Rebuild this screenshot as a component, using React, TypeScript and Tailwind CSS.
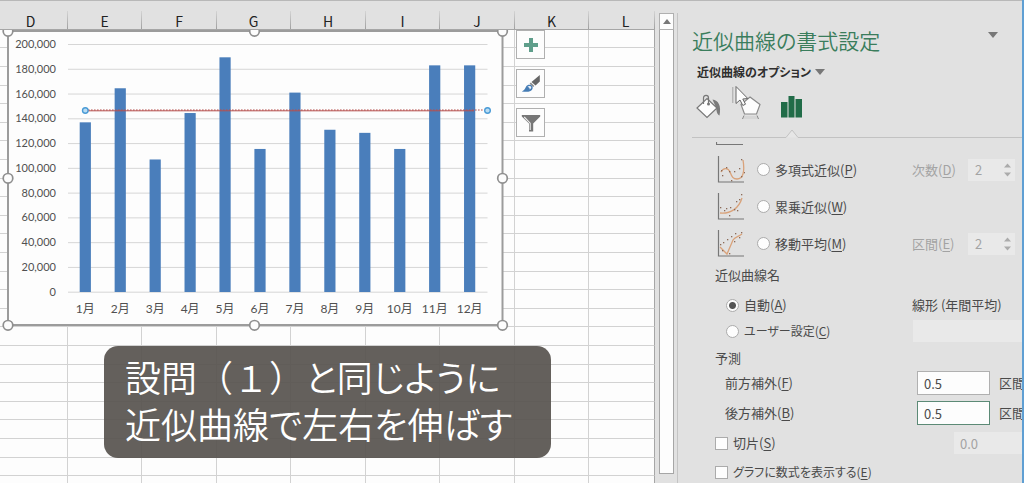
import React from 'react';

const columns = ['D', 'E', 'F', 'G', 'H', 'I', 'J', 'K', 'L'];
const rows = Array.from({ length: 26 }, (_, i) => i);

const bars = [
  { label: '1月', value: 137000 },
  { label: '2月', value: 164500 },
  { label: '3月', value: 107000 },
  { label: '4月', value: 144500 },
  { label: '5月', value: 189500 },
  { label: '6月', value: 115500 },
  { label: '7月', value: 161000 },
  { label: '8月', value: 131000 },
  { label: '9月', value: 128500 },
  { label: '10月', value: 115500 },
  { label: '11月', value: 183000 },
  { label: '12月', value: 183000 },
];

const ticks = Array.from({ length: 11 }, (_, i) => i * 20000);
const BASE = 292;
const yOf = (v: number) => BASE - (v / 200000) * 247.7;
const xOf = (i: number) => 85.3 + i * 34.94;

const handles = [
  [8, 31], [254.5, 31], [502.5, 31],
  [8, 178], [502.5, 178],
  [8, 325], [254.5, 325], [502.5, 325],
];

function Chart() {
  return (
    <svg
      className="absolute left-0 top-[29px] font-['Lato','Noto_Sans_CJK_JP',sans-serif]"
      width="510"
      height="302"
      viewBox="0 30 510 302"
      role="img"
      aria-label="月別棒グラフ"
    >
      <rect x="8" y="31" width="494.5" height="294" fill="#fdfdfd" stroke="#9c9c9c" strokeWidth="2" />
      {ticks.map((t) => (
        <g key={t}>
          <line x1="68" x2="487.5" y1={yOf(t) + 0.2} y2={yOf(t) + 0.2} stroke="#d6d6d6" strokeWidth="1" />
          <text x="56" y={yOf(t) + 3.7} fontSize="11" textAnchor="end" fill="#505050">
            {t.toLocaleString('en-US')}
          </text>
        </g>
      ))}
      {bars.map((b, i) => (
        <g key={b.label}>
          <rect x={xOf(i) - 5.6} y={yOf(b.value)} width="11.2" height={BASE - yOf(b.value)} fill="#4a7ebb" />
          <text x={xOf(i)} y="313" fontSize="12" textAnchor="middle" fill="#505050">
            {b.label}
          </text>
        </g>
      ))}
      <line x1="88" x2="474" y1="110.8" y2="110.8" stroke="#b5504f" strokeWidth="1" />
      <line x1="88" x2="484" y1="110" y2="110" stroke="#b5504f" strokeWidth="1.2" strokeDasharray="1.6 1.4" />
      {[85.3, 487.5].map((x) => (
        <circle key={x} cx={x} cy="110.5" r="2.8" fill="#b9dcf2" stroke="#4a9bd6" strokeWidth="1.4" />
      ))}
      {handles.map(([x, y]) => (
        <circle key={`${x}-${y}`} cx={x} cy={y + 0.3} r="4.8" fill="#fdfdfd" stroke="#8f8f8f" strokeWidth="1.7" />
      ))}
    </svg>
  );
}

function ChartButtons() {
  const cls = 'flex size-[29px] items-center justify-center border border-[#b0b0b0] bg-[#fdfdfd]';
  return (
    <div className="absolute left-[516px] top-[29px] flex flex-col gap-[10px]">
      <button className={cls} aria-label="グラフ要素">
        <svg width="16" height="16" viewBox="0 0 16 16">
          <path d="M6 1h4v5h5v4h-5v5H6v-5H1V6h5z" fill="#5f9e8b" />
        </svg>
      </button>
      <button className={cls} aria-label="グラフスタイル">
        <svg width="20" height="20" viewBox="0 0 20 20">
          <path d="M18.800 1v6.500l-4.300 4-4-3.500z" fill="#666" />
          <path d="M9.800 8.600l3.600 3.400-1.300 1.100-3.500-3.300z" fill="#8a8a8a" />
          <path d="M.8 17.500c2.700-1.200 3-2.800 4.200-4.800 1.300-2.200 4.300-2.600 5.900-1 1.500 1.600.9 4.200-1.400 5.200-2.400 1.100-5.200.8-8.700.6z" fill="#467db5" />
          <path d="M6.500 12.800c1.300-1.200 2.900-1 3.500-.2s.2 2.200-1.300 2.900c.1-1.500-.7-2.300-2.200-2.700z" fill="#f0f5fa" />
        </svg>
      </button>
      <button className={cls} aria-label="グラフフィルター">
        <svg width="20" height="20" viewBox="0 0 20 20">
          <path d="M.8 2h18.400v1.500L12.200 10.500v8H8v-8L.8 3.500z" fill="#777" />
          <path d="M3.200 4l6 6.200V17" fill="none" stroke="#eee" strokeWidth="1.100" />
        </svg>
      </button>
    </div>
  );
}

function Sheet() {
  return (
    <div className="relative min-w-0 flex-1 overflow-hidden">
      <table className="w-full table-fixed border-separate border-spacing-0 bg-[#fdfdfd]">
        <colgroup>
          <col className="w-[68px]" />
          <col className="w-[74px]" />
          <col className="w-[75px]" />
          <col className="w-[74px]" />
          <col className="w-[75px]" />
          <col className="w-[74px]" />
          <col className="w-[75px]" />
          <col className="w-[74px]" />
          <col />
        </colgroup>
        <thead>
          <tr className="h-[29px]">
            {columns.map((c) => (
              <th
                key={c}
                scope="col"
                className="border-b border-[#a6a6a6] bg-[#e1e1e1] p-0 align-bottom font-normal text-[#222]"
              >
                <div className="flex items-end text-[14px] leading-4">
                  <span className={c === 'D' ? 'flex-1 pr-[6px]' : c === 'L' ? 'flex-1 pl-2' : 'flex-1'}>{c}</span>
                  <span className="h-[18px] w-px bg-linear-to-b from-[#d4d4d4] to-[#a0a0a0]" />
                </div>
              </th>
            ))}
          </tr>
        </thead>
        <tbody>
          {rows.map((r) => (
            <tr key={r} className="h-[19px] nth-[5n+1]:h-[18px] nth-[5n+4]:h-[18px]">
              {columns.map((c) => (
                <td key={c} className="border-b border-r border-[#d2d2d2] p-0 last:border-r-[#a6a6a6]" />
              ))}
            </tr>
          ))}
        </tbody>
      </table>
      <Chart />
      <ChartButtons />
      <p className="absolute left-[104px] top-[345px] w-[447px] whitespace-nowrap rounded-[14px] bg-[#57524e]/92 px-[21px] pb-[11px] pt-[7px] text-[36px] font-[350] leading-[47px] text-white [font-feature-settings:'palt']">
        設問<span className="[font-feature-settings:normal]">（１）</span>と同じように
        <br />
        近似曲線で左右を伸ばす
      </p>
    </div>
  );
}

function ScrollBar() {
  return (
    <div className="ml-1 mr-[3px] flex w-[15px] flex-col pb-[9px] pt-3">
      <button className="flex h-[17px] items-center justify-center border border-[#b0b0b0] bg-[#fdfdfd]" aria-label="上へスクロール">
        <svg width="8" height="5" viewBox="0 0 8 5">
          <path d="M4 0l4 5H0z" fill="#777" />
        </svg>
      </button>
      <div className="flex-1 border border-t-0 border-[#a6a6a6] bg-[#fdfdfd]" />
    </div>
  );
}

const curves = {
  poly: {
    line: 'M4 16c2-4 7-5 9 0s3 7 7 7c6 0 8-7 6-19',
    dots: [[4, 14], [5, 19], [9, 11], [12, 15], [14, 24], [17, 15], [22, 12], [24, 3], [24, 20], [27, 16]],
  },
  power: {
    line: 'M3 20c11 1 19-5 22-15',
    dots: [[3, 14], [7, 17], [9, 15], [12, 22], [13, 14], [17, 16], [20, 17], [19, 8], [22, 6], [24, 1]],
  },
  moving: {
    line: 'M3 17l7 7 6-14c2-3 5-3 9-6',
    dots: [[3, 14], [5, 20], [6, 12], [12, 23], [10, 9], [14, 6], [17, 11], [18, 3], [22, 7], [24, 2]],
  },
};

function CurveIcon({ kind }: { kind: keyof typeof curves }) {
  const c = curves[kind];
  return (
    <svg width="28" height="27" viewBox="0 0 28 27" aria-hidden="true">
      <path d="M1.500 0v26H27" fill="none" stroke="#777" strokeWidth="1.200" />
      <path d={c.line} fill="none" stroke="#d9a27a" strokeWidth="1.300" />
      {c.dots.map(([x, y]) => (
        <rect key={`${x}-${y}`} x={x} y={y} width="1.300" height="1.300" fill="#8a6a58" />
      ))}
    </svg>
  );
}

const radioCls =
  'size-[13px] shrink-0 appearance-none rounded-full border border-[#ababab] bg-[#fdfdfd] checked:bg-[radial-gradient(circle,#555_3px,#fdfdfd_4px)]';
const checkCls = 'size-[13px] shrink-0 appearance-none border border-[#ababab] bg-[#fdfdfd]';

function Key({ k }: { k: string }) {
  return (
    <>
      (<span className="underline underline-offset-2">{k}</span>)
    </>
  );
}

function Spinner({ label, k, id }: { label: string; k: string; id: string }) {
  return (
    <div className="flex w-[110px] shrink-0 items-center text-[#a3a3a3]">
      <label htmlFor={id} className="w-14 shrink-0">
        {label}
        <Key k={k} />
      </label>
      <div className="flex h-[22px] w-[47px] items-center justify-between bg-[#e9e9e9] pl-[7px] pr-1">
        <input id={id} disabled defaultValue="2" className="w-5 bg-transparent text-[13px]" />
        <svg width="7" height="14" viewBox="0 0 7 14" aria-hidden="true">
          <path d="M3.500 0.500L7 4.500H0zM3.500 13.500L0 9.500h7z" fill="#ababab" />
        </svg>
      </div>
    </div>
  );
}

function FitRow({ kind, label, k, children }: { kind: keyof typeof curves; label: string; k: string; children?: React.ReactNode }) {
  return (
    <div className="flex h-[37px] items-center justify-between pl-[39px]">
      <label className="flex items-center">
        <CurveIcon kind={kind} />
        <input type="radio" name="fit" className={`${radioCls} ml-3 mr-[5px]`} />
        <span>
          {label}
          <Key k={k} />
        </span>
      </label>
      {children}
    </div>
  );
}

function ForecastRow({ id, label, k, active }: { id: string; label: string; k: string; active?: boolean }) {
  return (
    <div className="flex h-[30px] items-center justify-between pl-[47px]">
      <label htmlFor={id}>
        {label}
        <Key k={k} />
      </label>
      <div className="flex w-[105px] items-center">
        <input
          id={id}
          defaultValue="0.5"
          className={
            active
              ? 'h-6 w-[73px] shrink-0 border border-[#5c8a76] bg-[#fdfdfd] px-[6px] text-[13px]'
              : 'h-6 w-[73px] shrink-0 border border-[#b0b0b0] bg-[#fdfdfd] px-[6px] text-[13px]'
          }
        />
        <span className="ml-[9px] shrink-0">区間</span>
      </div>
    </div>
  );
}

function Panel() {
  return (
    <aside className="relative flex w-[344px] shrink-0 flex-col overflow-hidden text-[13px] leading-5 text-[#4a4a4a] [font-feature-settings:'palt']">
      <header className="flex shrink-0 items-start justify-between pl-[14px] pr-[24px] pt-[23px]">
        <h1 className="text-[21px] font-[350] leading-8 text-[#3a7d5c]">近似曲線の書式設定</h1>
        <button className="pt-2" aria-label="作業ウィンドウのオプション">
          <svg width="10" height="6" viewBox="0 0 10 6">
            <path d="M0 0h10L5 6z" fill="#777" />
          </svg>
        </button>
      </header>
      <button className="flex h-8 shrink-0 items-center gap-1 self-start pl-[19px] text-[12px] font-bold text-[#2e2e2e]">
        近似曲線のオプション
        <svg width="10" height="6" viewBox="0 0 10 6" aria-hidden="true">
          <path d="M0 0h10L5 6z" fill="#777" />
        </svg>
      </button>
      <nav className="flex h-[41px] shrink-0 items-start pl-[18px] pt-[6px]">
        <button aria-label="塗りつぶしと線">
          <svg width="26" height="26" viewBox="0 0 26 26">
            <path d="M16.500 5.500c6 1 9 6 7 16-2.500-1-3-4.500-3.500-8z" fill="#7b7b7b" />
            <path d="M11 4.500L21 14 11 23.500 1 14z" fill="#fdfdfd" stroke="#777" strokeWidth="1.200" />
            <path d="M7.500 10V4c0-3.500 5-3.500 5 0v6" fill="none" stroke="#777" strokeWidth="1.200" />
            <circle cx="12.500" cy="10" r="1.500" fill="#777" />
          </svg>
        </button>
        <button className="ml-[16px]" aria-label="効果">
          <svg width="24" height="26" viewBox="0 0 24 26">
            <path d="M12 3l10 7.500L18.500 20h-12L3 10.500z" fill="#fdfdfd" stroke="#8a8a8a" strokeWidth="1.200" />
            <path d="M6.500 22h12l1.500 3H5z" fill="#d6d6d6" />
            <path d="M6 21.500L4.500 25M19 21.500l1.500 3.500" stroke="#888" />
          </svg>
        </button>
        <button className="ml-[19px]" aria-label="近似曲線のオプション">
          <svg width="22" height="26" viewBox="0 0 22 26">
            <path d="M0 8h6.500v15.500H0zM7.500 2h6v21.500h-6zM14.500 5H21v18.500h-6.500z" fill="#216c48" />
          </svg>
        </button>
      </nav>
      <svg className="block h-[9px] w-full shrink-0" aria-hidden="true">
        <path d="M14 8.500H108L114 1l6 7.500H344" fill="#e6e6e6" stroke="#c2c2c2" />
      </svg>
      <svg className="mb-[5px] ml-[38px] mt-1 block h-1 w-7 shrink-0" aria-hidden="true">
        <path d="M.5 0v2.500H27" fill="none" stroke="#777" strokeWidth="1.200" />
      </svg>
      <form className="flex shrink-0 flex-col">
        <FitRow kind="poly" label="多項式近似" k="P">
          <Spinner id="order" label="次数" k="D" />
        </FitRow>
        <FitRow kind="power" label="累乗近似" k="W" />
        <FitRow kind="moving" label="移動平均" k="M">
          <Spinner id="period" label="区間" k="E" />
        </FitRow>
        <h2 className="h-[30px] pl-[37px] pt-[3px]">近似曲線名</h2>
        <div className="flex h-[26px] items-center justify-between pl-12">
          <label className="flex items-center gap-[5px]">
            <input type="radio" name="name" defaultChecked className={radioCls} />
            <span>
              自動
              <Key k="A" />
            </span>
          </label>
          <span className="w-[110px]">線形 (年間平均)</span>
        </div>
        <div className="flex h-[26px] items-center justify-between pl-12">
          <label className="flex items-center gap-[5px] text-[12px]">
            <input type="radio" name="name" className={radioCls} />
            <span>
              ユーザー設定
              <Key k="C" />
            </span>
          </label>
          <input disabled aria-label="ユーザー設定の名前" className="h-[22px] w-[109px] bg-[#e9e9e9]" />
        </div>
        <h2 className="h-6 pl-[37px] pt-1">予測</h2>
        <ForecastRow id="forward" label="前方補外" k="F" />
        <ForecastRow id="backward" label="後方補外" k="B" active />
        <div className="flex h-[30px] items-center justify-between pl-[37px]">
          <label className="flex items-center gap-[5px]">
            <input type="checkbox" className={checkCls} />
            <span>
              切片
              <Key k="S" />
            </span>
          </label>
          <input disabled aria-label="切片の値" defaultValue="0.0" className="h-[22px] w-[68px] bg-[#e9e9e9] px-[6px] text-[#a3a3a3]" />
        </div>
        <label className="flex h-[28px] items-center gap-[5px] pl-[37px] text-[12px]">
          <input type="checkbox" className={checkCls} />
          <span>
            グラフに数式を表示する
            <Key k="E" />
          </span>
        </label>
      </form>
      <svg className="absolute left-[54px] top-[84px]" width="20" height="24" viewBox="0 0 20 24" aria-hidden="true">
        <path d="M.8 2v16" stroke="#a5a5a5" />
        <path d="M4 1.500v17l4-3.500 2.800 5.500 2.700-1.300L10.800 14l5-.5z" fill="#fdfdfd" stroke="#666" />
      </svg>
    </aside>
  );
}

export default function App() {
  return (
    <main className="flex h-screen overflow-hidden bg-[#e1e1e1] font-['Noto_Sans_CJK_JP',sans-serif]">
      <div className="flex min-w-0 flex-1 border-t border-[#b8b8b8]">
        <Sheet />
        <ScrollBar />
        <div className="mt-3 w-px bg-[#c4c4c4]" />
        <Panel />
      </div>
      <div className="w-[2px] shrink-0 bg-[#5f9fd3]" />
    </main>
  );
}
